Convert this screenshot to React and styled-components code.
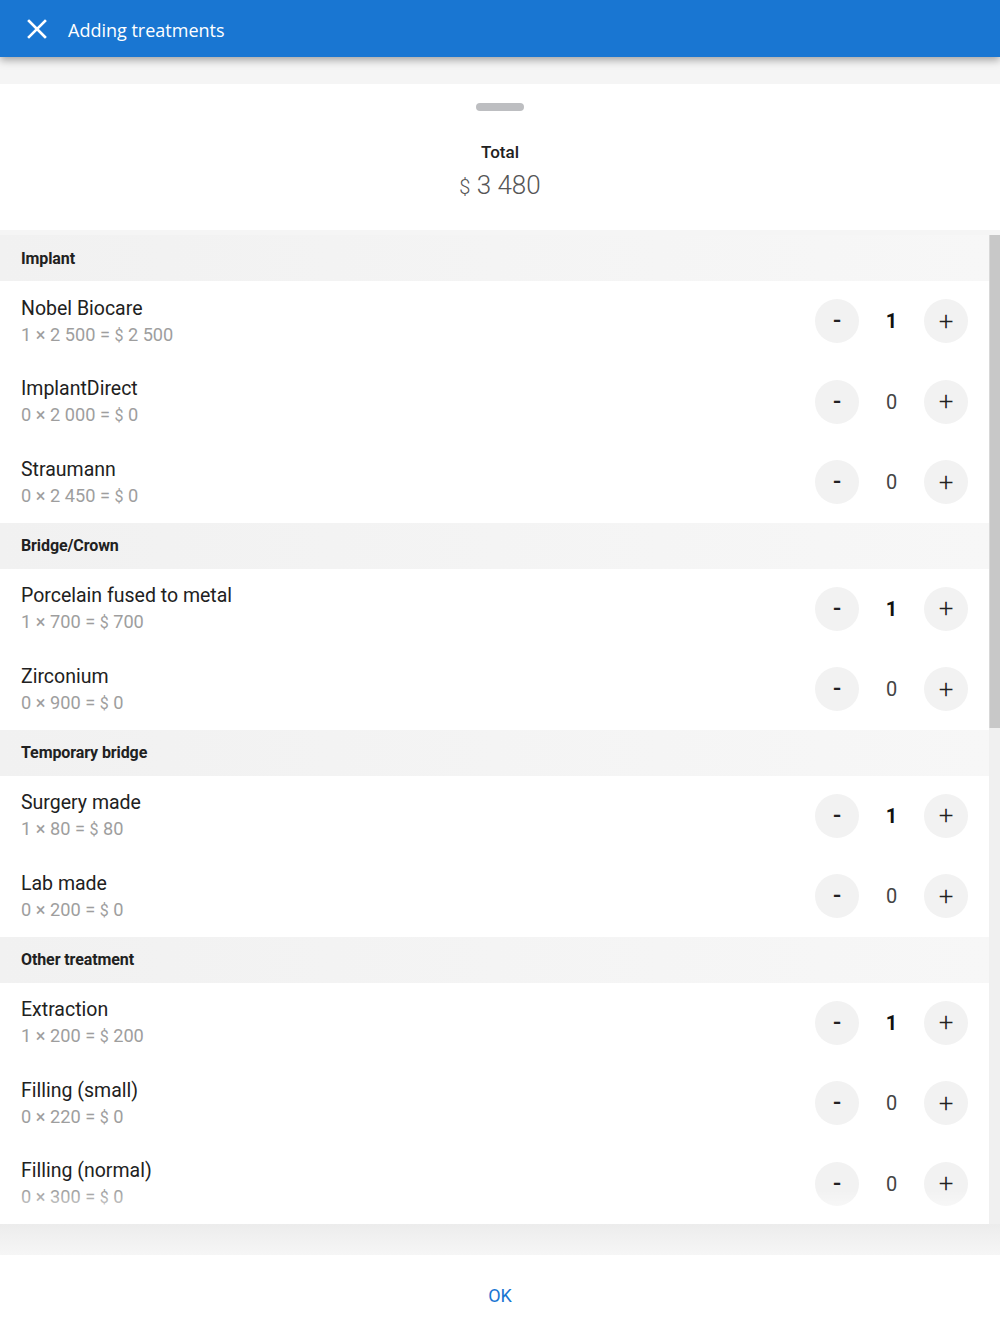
import styled, { createGlobalStyle } from "styled-components";

const GlobalStyle = createGlobalStyle`
  html, body {
    margin: 0;
    padding: 0;
    background: #f5f5f5;
  }
  * {
    box-sizing: border-box;
  }
`;

const groups = [
  {
    title: "Implant",
    items: [
      { name: "Nobel Biocare", qty: 1, price: "2 500", total: "2 500" },
      { name: "ImplantDirect", qty: 0, price: "2 000", total: "0" },
      { name: "Straumann", qty: 0, price: "2 450", total: "0" },
    ],
  },
  {
    title: "Bridge/Crown",
    items: [
      { name: "Porcelain fused to metal", qty: 1, price: "700", total: "700" },
      { name: "Zirconium", qty: 0, price: "900", total: "0" },
    ],
  },
  {
    title: "Temporary bridge",
    items: [
      { name: "Surgery made", qty: 1, price: "80", total: "80" },
      { name: "Lab made", qty: 0, price: "200", total: "0" },
    ],
  },
  {
    title: "Other treatment",
    items: [
      { name: "Extraction", qty: 1, price: "200", total: "200" },
      { name: "Filling (small)", qty: 0, price: "220", total: "0" },
      { name: "Filling (normal)", qty: 0, price: "300", total: "0" },
    ],
  },
];

export default function App() {
  return (
    <>
      <GlobalStyle />
      <Screen>
        <TopBar>
          <CloseButton aria-label="close">
            <svg width="20" height="20" viewBox="0 0 20 20">
              <path d="M2 2 L18 18 M18 2 L2 18" stroke="#fff" strokeWidth="2.6" strokeLinecap="square" />
            </svg>
          </CloseButton>
          <Title>Adding treatments</Title>
        </TopBar>

        <Body>
          <Summary>
            <Handle />
            <TotalLabel>Total</TotalLabel>
            <TotalAmount>
              <Currency>$</Currency> 3 480
            </TotalAmount>
          </Summary>

          <ListArea>
            <List>
              {groups.map((group) => (
                <section key={group.title}>
                  <GroupHeader>{group.title}</GroupHeader>
                  {group.items.map((item) => (
                    <Row key={item.name}>
                      <Info>
                        <Name>{item.name}</Name>
                        <Calc>
                          {item.qty} × {item.price} = <SmallCurrency>$</SmallCurrency> {item.total}
                        </Calc>
                      </Info>
                      <Stepper>
                        <RoundButton>-</RoundButton>
                        <Count active={item.qty > 0}>{item.qty}</Count>
                        <RoundButton plus>+</RoundButton>
                      </Stepper>
                    </Row>
                  ))}
                </section>
              ))}
            </List>
            <ScrollTrack>
              <ScrollThumb />
            </ScrollTrack>
          </ListArea>

          <BottomBand />
          <Footer>
            <OkButton>OK</OkButton>
          </Footer>
        </Body>
      </Screen>
    </>
  );
}

const Screen = styled.div`
  height: 100vh;
  display: flex;
  flex-direction: column;
  font-family: Roboto, "Liberation Sans", sans-serif;
  background: #f5f5f5;
`;

const TopBar = styled.header`
  height: 57px;
  flex-shrink: 0;
  display: flex;
  align-items: center;
  padding-left: 27px;
  padding-top: 2px;
  background: #1976d2;
  box-shadow: 0 3px 8px rgba(0, 0, 0, 0.35);
  position: relative;
  z-index: 2;
`;

const CloseButton = styled.button`
  border: none;
  background: none;
  padding: 0;
  width: 20px;
  height: 20px;
  display: flex;
  margin-right: 21px;
  margin-top: -2px;
`;

const Title = styled.h1`
  margin: 0;
  font-family: "Open Sans", "Noto Sans", sans-serif;
  font-size: 18px;
  font-weight: 400;
  color: #fff;
`;

const Body = styled.main`
  flex: 1;
  display: flex;
  flex-direction: column;
  padding-top: 27px;
  min-height: 0;
`;

const Summary = styled.div`
  height: 146px;
  flex-shrink: 0;
  background: #fff;
  display: flex;
  flex-direction: column;
  align-items: center;
  padding-top: 19px;
  margin-bottom: 5px;
`;

const Handle = styled.div`
  width: 48px;
  height: 8px;
  border-radius: 4px;
  background: #bdbec1;
`;

const TotalLabel = styled.div`
  margin-top: 31px;
  font-size: 17px;
  line-height: 20px;
  font-weight: 500;
  color: #212121;
`;

const TotalAmount = styled.div`
  margin-top: 8px;
  font-size: 26px;
  line-height: 30px;
  font-weight: 300;
  color: #555;
`;

const Currency = styled.span`
  font-size: 20px;
`;

const ListArea = styled.div`
  flex: 1;
  display: flex;
  min-height: 0;
  background: #fff;
  position: relative;

  &::after {
    content: "";
    position: absolute;
    left: 0;
    right: 11px;
    bottom: 0;
    height: 34px;
    background: linear-gradient(rgba(255, 255, 255, 0), rgba(255, 255, 255, 0.85));
    pointer-events: none;
  }
`;

const List = styled.div`
  flex: 1;
  overflow: hidden;
`;

const GroupHeader = styled.h2`
  margin: 0;
  height: 46px;
  display: flex;
  align-items: center;
  padding-left: 21px;
  font-size: 16px;
  font-weight: 700;
  letter-spacing: -0.1px;
  color: #212121;
  background: linear-gradient(to right, #f1f1f1, #f7f7f7);
`;

const Row = styled.div`
  height: 80.5px;
  display: flex;
  align-items: center;
  justify-content: space-between;
  padding: 0 21px;
  background: #fff;
`;

const Info = styled.div`
  display: flex;
  flex-direction: column;
  padding-top: 2px;
`;

const Name = styled.div`
  font-size: 19.5px;
  line-height: 26px;
  color: #212121;
`;

const Calc = styled.div`
  font-size: 18.2px;
  line-height: 26px;
  color: #9e9e9e;
`;

const SmallCurrency = styled.span`
  font-size: 16px;
`;

const Stepper = styled.div`
  display: flex;
  align-items: center;
`;

const RoundButton = styled.button`
  width: 44px;
  height: 44px;
  border-radius: 50%;
  border: none;
  padding: 0 0 ${({ plus }) => (plus ? "1px" : "2px")};
  background: #f2f2f2;
  font-family: Roboto, "Liberation Sans", sans-serif;
  font-size: ${({ plus }) => (plus ? "26px" : "24px")};
  font-weight: ${({ plus }) => (plus ? 300 : 500)};
  color: #222;
  display: flex;
  align-items: center;
  justify-content: center;
`;

const Count = styled.span`
  width: 65px;
  text-align: center;
  font-size: 20px;
  font-weight: ${({ active }) => (active ? 700 : 400)};
  color: ${({ active }) => (active ? "#111" : "#444")};
`;

const ScrollTrack = styled.div`
  width: 11px;
  flex-shrink: 0;
  background: #f0f0f0;
`;

const ScrollThumb = styled.div`
  height: 493px;
  background: #c8c8c8;
  border-left: 1px solid #d8d8d8;
`;

const BottomBand = styled.div`
  height: 31px;
  flex-shrink: 0;
  background: linear-gradient(#ececec, #f6f6f6);
`;

const Footer = styled.footer`
  height: 79px;
  flex-shrink: 0;
  background: #fff;
  display: flex;
  align-items: center;
  justify-content: center;
`;

const OkButton = styled.button`
  border: none;
  background: none;
  font-family: Roboto, "Liberation Sans", sans-serif;
  font-size: 18px;
  color: #1976d2;
  padding: 0;
  margin-top: 2px;
`;
